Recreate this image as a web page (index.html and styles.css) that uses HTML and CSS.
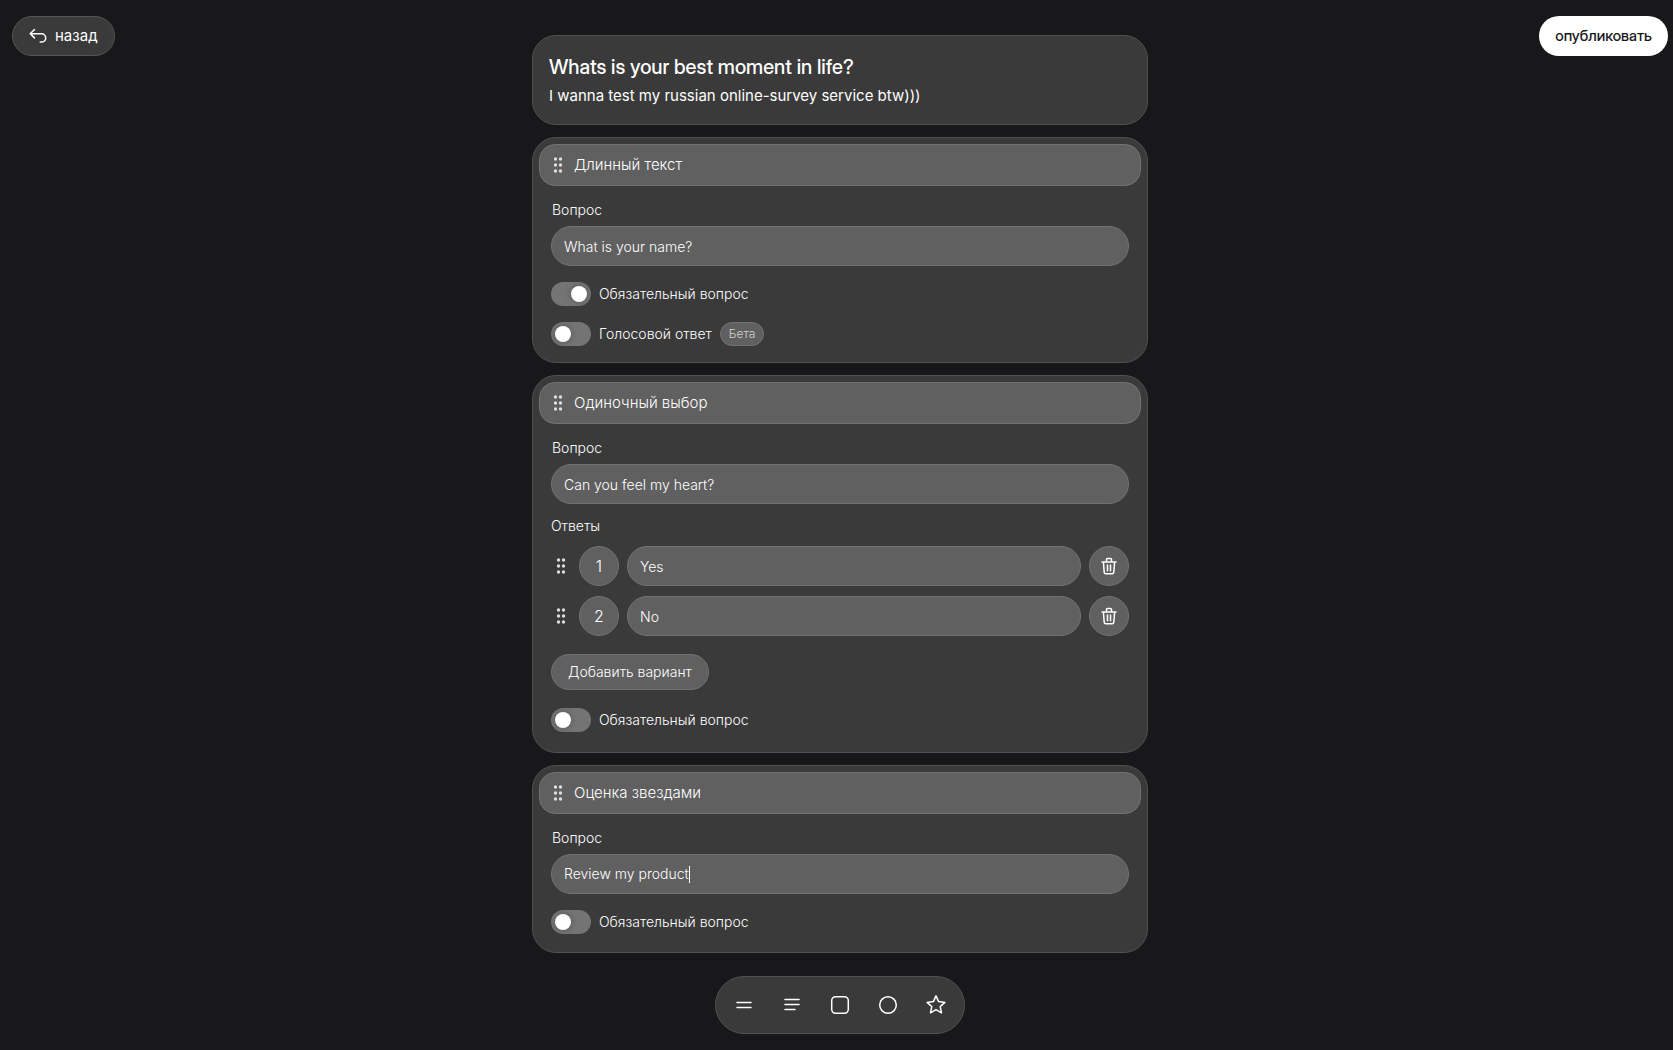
FILE: index.html
```html
<!DOCTYPE html>
<html lang="ru">
<head>
    <meta charset="UTF-8">
    <meta name="viewport" content="width=device-width, initial-scale=1.0">
    <title>Редактор опроса</title>
    <link rel="stylesheet" href="styles.css">
</head>
<body>

    <!-- Общие иконки -->
    <svg class="sprite" aria-hidden="true">
        <symbol id="icon-drag" viewBox="0 0 10 16">
            <circle cx="2.5" cy="2" r="1.7"/><circle cx="7.5" cy="2" r="1.7"/>
            <circle cx="2.5" cy="8" r="1.7"/><circle cx="7.5" cy="8" r="1.7"/>
            <circle cx="2.5" cy="14" r="1.7"/><circle cx="7.5" cy="14" r="1.7"/>
        </symbol>
        <symbol id="icon-trash" viewBox="0 0 16 18">
            <path d="M1 5h14M5.5 5V2.6c0-.7.4-1.1 1.1-1.1h2.8c.7 0 1.1.4 1.1 1.1V5M2.4 5l.8 10.2c.1 1 .6 1.5 1.6 1.5h6.4c1 0 1.5-.5 1.6-1.5L13.6 5M6.5 8v5.8M9.5 8v5.8"/>
        </symbol>
    </svg>

    <div class="page">
        <header class="topbar">
            <a class="button-back" href="#">
                <svg class="icon" width="18" height="16" viewBox="0 0 18 16"><path d="M5.5 1.5L1.2 5.7L5.5 9.9M1.2 5.7h11.3a4.2 4.2 0 0 1 0 8.4h-1.3"/></svg>
                назад
            </a>
            <button class="button-publish" type="button">опубликовать</button>
        </header>

        <main class="survey">
            <section class="card card-title">
                <h1>Whats is your best moment in life?</h1>
                <p>I wanna test my russian online-survey service btw)))</p>
            </section>

            <!-- Длинный текст -->
            <section class="card">
                <h2 class="card-header"><svg class="drag"><use href="#icon-drag"/></svg>Длинный текст</h2>
                <div class="card-body">
                    <div class="question">
                        <label class="label" for="question1">Вопрос</label>
                        <input class="input" type="text" id="question1" value="What is your name?">
                    </div>
                    <label class="option"><input class="switch" type="checkbox" checked>Обязательный вопрос</label>
                    <label class="option"><input class="switch" type="checkbox">Голосовой ответ <span class="badge">Бета</span></label>
                </div>
            </section>

            <!-- Одиночный выбор -->
            <section class="card">
                <h2 class="card-header"><svg class="drag"><use href="#icon-drag"/></svg>Одиночный выбор</h2>
                <div class="card-body card-body-choice">
                    <div class="question">
                        <label class="label" for="question2">Вопрос</label>
                        <input class="input" type="text" id="question2" value="Can you feel my heart?">
                    </div>
                    <div class="answers">
                        <h3>Ответы</h3>
                        <div class="answer">
                            <svg class="drag"><use href="#icon-drag"/></svg>
                            <label class="circle" for="answer1">1</label>
                            <input class="input" type="text" id="answer1" value="Yes">
                            <button class="circle" type="button" aria-label="Удалить"><svg class="icon trash"><use href="#icon-trash"/></svg></button>
                        </div>
                        <div class="answer">
                            <svg class="drag"><use href="#icon-drag"/></svg>
                            <label class="circle" for="answer2">2</label>
                            <input class="input" type="text" id="answer2" value="No">
                            <button class="circle" type="button" aria-label="Удалить"><svg class="icon trash"><use href="#icon-trash"/></svg></button>
                        </div>
                    </div>
                    <button class="button-add" type="button">Добавить вариант</button>
                    <label class="option"><input class="switch" type="checkbox">Обязательный вопрос</label>
                </div>
            </section>

            <!-- Оценка звездами -->
            <section class="card">
                <h2 class="card-header"><svg class="drag"><use href="#icon-drag"/></svg>Оценка звездами</h2>
                <div class="card-body card-body-stars">
                    <div class="question">
                        <label class="label" for="question3">Вопрос</label>
                        <div class="input input-active">
                            <input type="text" id="question3" value="Review my product"><span class="caret"></span>
                        </div>
                    </div>
                    <label class="option"><input class="switch" type="checkbox">Обязательный вопрос</label>
                </div>
            </section>
        </main>

        <!-- Панель добавления вопросов -->
        <nav class="toolbar">
            <button type="button" aria-label="Короткий текст"><svg class="icon" width="20" height="20" viewBox="0 0 20 20"><path d="M3 7.5h14M3 12.5h14"/></svg></button>
            <button type="button" aria-label="Длинный текст"><svg class="icon" width="20" height="20" viewBox="0 0 20 20"><path d="M3 4.5h14M3 9.5h14M3 14.5h10"/></svg></button>
            <button type="button" aria-label="Множественный выбор"><svg class="icon" width="20" height="20" viewBox="0 0 20 20"><rect x="1.7" y="1.7" width="16.6" height="16.6" rx="4"/></svg></button>
            <button type="button" aria-label="Одиночный выбор"><svg class="icon" width="20" height="20" viewBox="0 0 20 20"><circle cx="10" cy="10" r="8.3"/></svg></button>
            <button type="button" aria-label="Оценка звездами"><svg class="icon" width="20" height="20" viewBox="0 0 20 20"><path d="M10 .9L12.6 6.6L18.9 7.4L14.2 11.6L15.5 17.8L10 14.7L4.5 17.8L5.8 11.6L1.1 7.4L7.4 6.6Z"/></svg></button>
        </nav>
    </div>

</body>
</html>
```
FILE: styles.css
```css
* {
    box-sizing: border-box;
}
body {
    margin: 0;
    background-color: #18181a;
    color: #fff;
    font-family: Inter, sans-serif;
    font-size: 14px;
    font-weight: 300;
    line-height: 20px;
}
h1, h2, h3, p {
    margin: 0;
    font-weight: 300;
}
button, input {
    font: inherit;
    color: inherit;
    margin: 0;
}
button {
    cursor: pointer;
}
.sprite {
    position: absolute;
    width: 0;
    height: 0;
}
.icon {
    fill: none;
    stroke: currentColor;
    stroke-width: 1.5;
    stroke-linecap: round;
    stroke-linejoin: round;
}
.drag {
    width: 10px;
    height: 16px;
    fill: #dedede;
}
.trash {
    width: 16px;
    height: 18px;
}
.page {
    display: grid;
    grid-template-columns: 1fr minmax(0, 616px) 1fr;
    justify-items: center;
    padding: 16px 5px 16px 12px;
}
/* Верхняя панель */
.topbar {
    grid-area: 1 / 1 / 2 / 4;
    width: 100%;
    display: flex;
    justify-content: space-between;
    align-items: flex-start;
}
.button-back, .button-publish {
    display: flex;
    align-items: center;
    gap: 8px;
    height: 40px;
    padding: 0 16px;
    border-radius: 20px;
}
.button-back {
    border: 1px solid #555;
    background-color: #3a3a3a;
    text-decoration: none;
    color: #fff;
    font-size: 15px;
    font-weight: 400;
}
.button-publish {
    border: none;
    background-color: #fff;
    color: #18181a;
    font-family: "Inter Display", Inter, sans-serif;
    font-size: 15px;
    font-weight: 500;
}
/* Карточки */
.survey {
    grid-area: 1 / 2 / 2 / 3;
    width: 100%;
    display: flex;
    flex-direction: column;
    gap: 12px;
    padding-top: 19px;
}
.card {
    border: 1px solid #505050;
    border-radius: 24px;
    background-color: #3a3a3a;
    padding: 6px;
}
.card-title {
    padding: 17px 16px 16px;
}
.card-title h1 {
    font-family: "Inter Display", Inter, sans-serif;
    font-size: 20px;
    line-height: 28px;
    font-weight: 500;
}
.card-title p {
    font-size: 15px;
    font-weight: 400;
    line-height: 24px;
    padding-top: 3px;
}
.card-header {
    display: flex;
    align-items: center;
    gap: 11px;
    height: 42px;
    padding: 0 13px;
    border: 1px solid #727272;
    border-radius: 16px;
    background-color: #606060;
    font-size: 15px;
}
.card-body {
    display: flex;
    flex-direction: column;
    align-items: flex-start;
    gap: 16px;
    padding: 14px 12px 10px;
}
.card-body-choice {
    gap: 18px;
    padding-bottom: 14px;
}
.card-body-stars {
    padding-bottom: 12px;
}
.question, .answers {
    width: 100%;
    display: flex;
    flex-direction: column;
    gap: 6px;
}
.answers {
    gap: 10px;
    margin-top: -6px;
}
.answers h3 {
    font-size: 14px;
}
.label {
    padding-left: 1px;
}
.input {
    width: 100%;
    min-width: 0;
    height: 40px;
    padding: 0 12px;
    border: 1px solid #727272;
    border-radius: 20px;
    background-color: #606060;
    outline: none;
}
.input-active {
    display: flex;
    align-items: center;
}
.input-active input {
    field-sizing: content;
    padding: 0;
    border: none;
    background: none;
    outline: none;
}
.caret {
    width: 1px;
    height: 17px;
    background-color: #fff;
}
.answer {
    display: flex;
    align-items: center;
    gap: 8px;
}
.answer .drag {
    flex-shrink: 0;
    margin: 0 5px;
}
.circle {
    flex-shrink: 0;
    display: flex;
    align-items: center;
    justify-content: center;
    width: 40px;
    height: 40px;
    padding: 0;
    border: 1px solid #727272;
    border-radius: 50%;
    background-color: #606060;
    font-size: 16px;
}
.button-add {
    height: 36px;
    padding: 0 16px;
    border: 1px solid #727272;
    border-radius: 18px;
    background-color: #606060;
}
.option {
    display: flex;
    align-items: center;
    gap: 8px;
    height: 24px;
}
/* Переключатель */
.switch {
    appearance: none;
    display: flex;
    align-items: center;
    width: 40px;
    height: 24px;
    padding: 0 4px;
    border-radius: 12px;
    background-color: #747474;
    cursor: pointer;
}
.switch::before {
    content: "";
    width: 16px;
    height: 16px;
    border-radius: 50%;
    background-color: #fff;
    box-shadow: 0 0 6px rgba(0, 0, 0, 0.3);
}
.switch:checked {
    justify-content: flex-end;
}
.badge {
    height: 24px;
    padding: 0 8px;
    border: 1px solid #727272;
    border-radius: 12px;
    background-color: #606060;
    color: #d0d0d0;
    font-size: 12px;
    line-height: 22px;
}
/* Нижняя панель */
.toolbar {
    grid-area: 2 / 1 / 3 / 4;
    display: flex;
    gap: 8px;
    margin-top: 23px;
    padding: 8px;
    border: 1px solid #505050;
    border-radius: 29px;
    background-color: #3a3a3a;
}
.toolbar button {
    display: flex;
    align-items: center;
    justify-content: center;
    width: 40px;
    height: 40px;
    padding: 0;
    border: none;
    background: none;
}
```
